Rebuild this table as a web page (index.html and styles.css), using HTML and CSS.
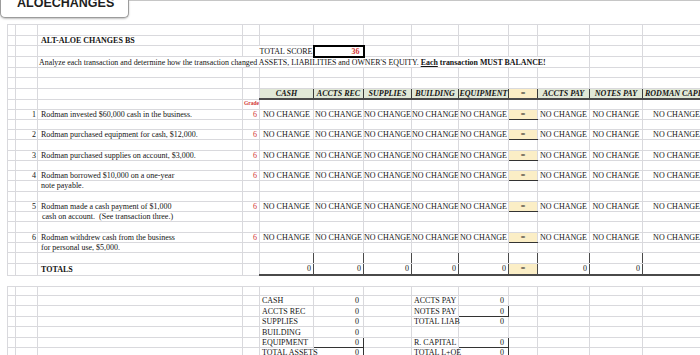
FILE: index.html
```html
<!DOCTYPE html>
<html>
<head>
<meta charset="utf-8">
<title>ALOECHANGES</title>
<link rel="stylesheet" href="styles.css">
</head>
<body>
<div class="page">
  <div class="topbar">
    <div class="tab"><div class="tab-title">ALOECHANGES</div></div>
  </div>

  <table class="grid upper">
    <colgroup>
      <col class="ca"><col class="cb"><col class="cc"><col class="cd"><col class="ce"><col class="cf"><col class="cg"><col class="ch"><col class="ci"><col class="cj"><col class="ck"><col class="cl"><col class="cm">
    </colgroup>
    <tr class="h11"><td></td><td></td><td></td><td></td><td></td><td></td><td></td><td></td><td></td><td></td><td></td><td></td><td></td></tr>
    <tr class="h10"><td></td><td></td><td class="title">ALT-ALOE CHANGES BS</td><td></td><td></td><td></td><td></td><td></td><td></td><td></td><td></td><td></td><td></td></tr>
    <tr class="h11"><td></td><td></td><td></td><td class="score-label" colspan="2">TOTAL SCORE</td><td class="score">36</td><td></td><td></td><td></td><td></td><td></td><td></td><td></td></tr>
    <tr class="h10"><td></td><td></td><td class="intro" colspan="9">Analyze each transaction and determine how the transaction changed ASSETS, LIABILITIES and OWNER'S EQUITY. <b><u>Each</u> transaction MUST BALANCE!</b></td><td></td><td></td></tr>
    <tr class="h10"><td></td><td></td><td></td><td></td><td></td><td></td><td></td><td></td><td></td><td></td><td></td><td></td><td></td></tr>
    <tr class="h11"><td></td><td></td><td></td><td></td><td></td><td></td><td></td><td></td><td></td><td></td><td></td><td></td><td></td></tr>
    <tr class="h11"><td></td><td></td><td></td><td></td><td class="hd">CASH</td><td class="hd">ACCTS REC</td><td class="hd">SUPPLIES</td><td class="hd">BUILDING</td><td class="hd">EQUIPMENT</td><td class="hd hd-eq">=</td><td class="hd">ACCTS PAY</td><td class="hd">NOTES PAY</td><td class="hd hd-cap">RODMAN CAPITAL</td></tr>
    <tr class="h10"><td></td><td></td><td></td><td class="grade">Grade</td><td></td><td></td><td></td><td></td><td></td><td></td><td></td><td></td><td></td></tr>

    <tr class="h10"><td></td><td class="num">1</td><td class="desc">Rodman invested $60,000 cash in the business.</td><td class="pts">6</td><td class="nc">NO CHANGE</td><td class="nc">NO CHANGE</td><td class="nc">NO CHANGE</td><td class="nc">NO CHANGE</td><td class="nc">NO CHANGE</td><td class="eq">=</td><td class="nc ap">NO CHANGE</td><td class="nc">NO CHANGE</td><td class="nc cap">NO CHANGE</td></tr>
    <tr class="h10"><td></td><td></td><td></td><td></td><td></td><td></td><td></td><td></td><td></td><td></td><td></td><td></td><td></td></tr>

    <tr class="h10"><td></td><td class="num">2</td><td class="desc">Rodman purchased equipment for cash, $12,000.</td><td class="pts">6</td><td class="nc">NO CHANGE</td><td class="nc">NO CHANGE</td><td class="nc">NO CHANGE</td><td class="nc">NO CHANGE</td><td class="nc">NO CHANGE</td><td class="eq">=</td><td class="nc ap">NO CHANGE</td><td class="nc">NO CHANGE</td><td class="nc cap">NO CHANGE</td></tr>
    <tr class="h11"><td></td><td></td><td></td><td></td><td></td><td></td><td></td><td></td><td></td><td></td><td></td><td></td><td></td></tr>

    <tr class="h10"><td></td><td class="num">3</td><td class="desc">Rodman purchased supplies on account, $3,000.</td><td class="pts">6</td><td class="nc">NO CHANGE</td><td class="nc">NO CHANGE</td><td class="nc">NO CHANGE</td><td class="nc">NO CHANGE</td><td class="nc">NO CHANGE</td><td class="eq">=</td><td class="nc ap">NO CHANGE</td><td class="nc">NO CHANGE</td><td class="nc cap">NO CHANGE</td></tr>
    <tr class="h10"><td></td><td></td><td></td><td></td><td></td><td></td><td></td><td></td><td></td><td></td><td></td><td></td><td></td></tr>

    <tr class="h10"><td></td><td class="num">4</td><td class="desc">Rodman borrowed $10,000 on a one-year</td><td class="pts">6</td><td class="nc">NO CHANGE</td><td class="nc">NO CHANGE</td><td class="nc">NO CHANGE</td><td class="nc">NO CHANGE</td><td class="nc">NO CHANGE</td><td class="eq">=</td><td class="nc ap">NO CHANGE</td><td class="nc">NO CHANGE</td><td class="nc cap">NO CHANGE</td></tr>
    <tr class="h11"><td></td><td></td><td class="desc">note payable.</td><td></td><td></td><td></td><td></td><td></td><td></td><td></td><td></td><td></td><td></td></tr>
    <tr class="h10"><td></td><td></td><td></td><td></td><td></td><td></td><td></td><td></td><td></td><td></td><td></td><td></td><td></td></tr>

    <tr class="h10"><td></td><td class="num">5</td><td class="desc">Rodman made a cash payment of $1,000</td><td class="pts">6</td><td class="nc">NO CHANGE</td><td class="nc">NO CHANGE</td><td class="nc">NO CHANGE</td><td class="nc">NO CHANGE</td><td class="nc">NO CHANGE</td><td class="eq">=</td><td class="nc ap">NO CHANGE</td><td class="nc">NO CHANGE</td><td class="nc cap">NO CHANGE</td></tr>
    <tr class="h10"><td></td><td></td><td class="desc indent">cash on account.&nbsp; (See transaction three.)</td><td></td><td></td><td></td><td></td><td></td><td></td><td></td><td></td><td></td><td></td></tr>
    <tr class="h11"><td></td><td></td><td></td><td></td><td></td><td></td><td></td><td></td><td></td><td></td><td></td><td></td><td></td></tr>

    <tr class="h10"><td></td><td class="num">6</td><td class="desc">Rodman withdrew cash from the business</td><td class="pts">6</td><td class="nc">NO CHANGE</td><td class="nc">NO CHANGE</td><td class="nc">NO CHANGE</td><td class="nc">NO CHANGE</td><td class="nc">NO CHANGE</td><td class="eq">=</td><td class="nc ap">NO CHANGE</td><td class="nc">NO CHANGE</td><td class="nc cap">NO CHANGE</td></tr>
    <tr class="h10"><td></td><td></td><td class="desc">for personal use, $5,000.</td><td></td><td></td><td></td><td></td><td></td><td></td><td></td><td></td><td></td><td></td></tr>
    <tr class="h11"><td></td><td></td><td></td><td></td><td class="tb"></td><td class="tb"></td><td class="tb"></td><td class="tb"></td><td class="tb"></td><td class="tb"></td><td class="tb"></td><td class="tb"></td><td class="tb"></td></tr>
    <tr class="h12"><td></td><td></td><td class="title">TOTALS</td><td></td><td class="tot">0</td><td class="tot">0</td><td class="tot">0</td><td class="tot">0</td><td class="tot">0</td><td class="tot tot-eq">=</td><td class="tot">0</td><td class="tot">0</td><td class="tot"></td></tr>
  </table>

  <table class="grid lower">
    <colgroup>
      <col class="ca"><col class="cb"><col class="cc"><col class="cd"><col class="ce"><col class="cf"><col class="cg"><col class="ch"><col class="ci"><col class="cj"><col class="ck"><col class="cl"><col class="cm">
    </colgroup>
    <tr class="h9"><td></td><td></td><td></td><td></td><td></td><td></td><td></td><td></td><td></td><td></td><td></td><td></td><td></td></tr>
    <tr class="h10"><td></td><td></td><td></td><td></td><td class="lbl">CASH</td><td class="val">0</td><td></td><td class="lbl">ACCTS PAY</td><td class="val">0</td><td></td><td></td><td></td><td></td></tr>
    <tr class="h11"><td></td><td></td><td></td><td></td><td class="lbl">ACCTS REC</td><td class="val">0</td><td></td><td class="lbl">NOTES PAY</td><td class="val rb bb">0</td><td></td><td></td><td></td><td></td></tr>
    <tr class="h10"><td></td><td></td><td></td><td></td><td class="lbl">SUPPLIES</td><td class="val">0</td><td></td><td class="lbl">TOTAL LIAB</td><td class="val">0</td><td></td><td></td><td></td><td></td></tr>
    <tr class="h11"><td></td><td></td><td></td><td></td><td class="lbl">BUILDING</td><td class="val">0</td><td></td><td></td><td></td><td></td><td></td><td></td><td></td></tr>
    <tr class="h10"><td></td><td></td><td></td><td></td><td class="lbl">EQUIPMENT</td><td class="val rb bb">0</td><td></td><td class="lbl">R. CAPITAL</td><td class="val rb bb">0</td><td></td><td></td><td></td><td></td></tr>
    <tr class="h10"><td></td><td></td><td></td><td></td><td class="lbl">TOTAL ASSETS</td><td class="val rb">0</td><td></td><td class="lbl">TOTAL L+OE</td><td class="val rb">0</td><td></td><td></td><td></td><td></td></tr>
  </table>
</div>
</body>
</html>
```

FILE: styles.css
```css
* { box-sizing: border-box; }

html, body {
  margin: 0;
  padding: 0;
  background: #ffffff;
}

.page {
  width: 700px;
  height: 355px;
  overflow: hidden;
  font-family: "Liberation Serif", "Times New Roman", serif;
  color: #141414;
}

/* sheet tab */
.topbar {
  height: 24px;
  border-top: 1px solid #c6c6c6;
}

.tab {
  width: 129px;
  height: 18px;
  margin-top: -1px;
  background: #ffffff;
  border: 1px solid #9c9c9c;
  border-top: none;
  border-radius: 0 0 5px 5px;
  box-shadow: 0 1px 2px rgba(0, 0, 0, 0.25);
  overflow: hidden;
}

.tab-title {
  margin-top: -3px;
  padding-left: 16px;
  font-family: "Liberation Sans", Arial, sans-serif;
  font-weight: bold;
  font-size: 12.5px;
  line-height: 12.5px;
  color: #1e1e1e;
}

/* spreadsheet grid */
.grid {
  border-collapse: collapse;
  table-layout: fixed;
  width: 695px;
  margin-left: 7px;
  font-size: 8px;
  line-height: 9px;
}

.lower { margin-top: 10px; }

.ca { width: 8px; }
.cb { width: 22px; }
.cc { width: 205px; }
.cd { width: 17px; }
.ce { width: 54px; }
.cf { width: 50px; }
.cg { width: 48px; }
.ch { width: 47px; }
.ci { width: 50px; }
.cj { width: 29px; }
.ck { width: 52px; }
.cl { width: 53px; }
.cm { width: 60px; }

.h9 { height: 9px; }
.h10 { height: 10px; }
.h11 { height: 11px; }
.h12 { height: 12px; }

.grid td {
  border: 1px solid #d9d9dd;
  padding: 0 2px;
  white-space: nowrap;
  overflow: hidden;
  vertical-align: middle;
}

.grid td.title {
  font-weight: bold;
  padding-left: 3px;
}

.grid td.score-label {
  text-align: right;
  padding-right: 0;
}

.grid td.score {
  border: 2px solid #000000;
  text-align: right;
  color: #d23434;
  font-weight: bold;
  padding-right: 3px;
}

.grid td.intro { padding-left: 1px; overflow: visible; font-size: 7.9px; }

.grid td.hd {
  background: #e1e8d7;
  font-weight: bold;
  font-style: italic;
  text-align: center;
  padding: 0;
  border-right: 1px solid #3a3a3a;
  border-bottom: 2px solid #4a4a4a;
}

.grid td.hd-eq { background: #fbeec6; }
.grid td.hd-cap { text-align: left; padding-left: 2px; overflow: visible; }

.grid td.grade {
  color: #d23434;
  font-size: 5.5px;
  font-weight: bold;
  line-height: 6px;
  padding: 0 0 0 1px;
  vertical-align: top;
  overflow: visible;
}

.grid td.num { text-align: right; padding-right: 1px; }
.grid td.desc { padding-left: 3px; }
.grid td.indent { padding-left: 4px; }
.grid td.pts { text-align: right; color: #d23434; padding-right: 2px; }

.grid td.nc { text-align: center; padding: 0; }
.grid td.cap { text-align: right; padding-right: 2px; }

.grid td.eq {
  background: #fbeec6;
  text-align: center;
  padding: 0;
  border-bottom: 1px solid #333333;
}

.grid td.ap { border-left: 1px solid #333333; }

.grid td.tb { border-right: 1px solid #4a4a4a; }

.grid td.tot {
  text-align: right;
  padding-right: 2px;
  border-top: 1px solid #8a8a8a;
  border-right: 1px solid #4a4a4a;
  border-bottom: 2px solid #4a4a4a;
}

.grid td.tot-eq {
  background: #fbeec6;
  text-align: center;
  padding: 0;
}

.grid td.lbl { padding-left: 2px; overflow: visible; }
.grid td.val { text-align: right; padding-right: 4px; }
.grid td.rb { border-right: 1px solid #333333; }
.grid td.bb { border-bottom: 1px solid #333333; }
```
